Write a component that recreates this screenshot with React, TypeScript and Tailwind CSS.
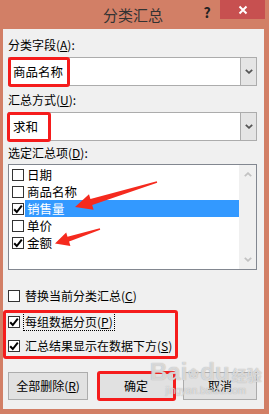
import React from "react";

const items = [
  { t: "日期", c: false, sel: false },
  { t: "商品名称", c: false, sel: false },
  { t: "销售量", c: true, sel: true },
  { t: "单价", c: false, sel: false },
  { t: "金额", c: true, sel: false },
];

function Box({ checked }: { checked?: boolean }) {
  return (
    <span className="w-[12px] h-[12px] border border-[#333333] bg-white shrink-0 flex items-center justify-center">
      {checked && (
        <svg width="10" height="10" viewBox="0 0 10 10">
          <path d="M1.2 5.2 L3.8 8 L8.8 1.6" stroke="#000" strokeWidth="2" fill="none" />
        </svg>
      )}
    </span>
  );
}

function Chevron({ up, color = "#555" }: { up?: boolean; color?: string }) {
  return (
    <svg width="8" height="5" viewBox="0 0 8 5">
      <path d={up ? "M0.8 4.2 L4 1.2 L7.2 4.2" : "M0.8 0.8 L4 3.8 L7.2 0.8"} stroke={color} strokeWidth="1.8" fill="none" />
    </svg>
  );
}

function Combo({ value }: { value: string }) {
  return (
    <div className="mt-[4px] h-[29px] border border-[#acacac] bg-white flex">
      <div className="flex-1 pl-[4px] leading-[27px] text-[12.5px]">{value}</div>
      <div className="w-[16px] bg-[#e5e5e5] border-l border-[#acacac] flex items-center justify-center">
        <Chevron />
      </div>
    </div>
  );
}

export default function App() {
  return (
    <div className="w-[269px] h-[414px] bg-[#d27f66] flex flex-col relative overflow-hidden text-[12px] text-black font-['Microsoft_YaHei','Noto_Sans_CJK_SC',sans-serif]">
      {/* title bar */}
      <div className="h-[29px] flex items-start shrink-0">
        <div className="flex-1 pl-[68px] text-center text-[15px] leading-[29px] text-[#333]">分类汇总</div>
        <div className="w-[22px] pr-[4px] text-center font-bold text-[14px] leading-[24px] text-[#222]">?</div>
        <div className="w-[45px] h-[19px] bg-[#c75050] flex items-center justify-center">
          <svg width="10" height="10" viewBox="0 0 10 10">
            <path d="M1.5 1.5 L8.5 8.5 M8.5 1.5 L1.5 8.5" stroke="#fff" strokeWidth="2" />
          </svg>
        </div>
        <div className="w-[4px]" />
      </div>

      {/* client area */}
      <div className="ml-[3px] mr-[5px] h-[380px] bg-[#f0f0f0] pl-[5px] pr-[7px] flex flex-col">
        <div className="mt-[8px] h-[16px] leading-[16px]">分类字段(<u>A</u>):</div>
        <Combo value="商品名称" />
        <div className="mt-[6px] h-[16px] leading-[16px]">汇总方式(<u>U</u>):</div>
        <Combo value="求和" />
        <div className="mt-[4px] h-[16px] leading-[16px]">选定汇总项(<u>D</u>):</div>

        <div className="mt-[3px] h-[106px] border border-[#828790] bg-white flex">
          <div className="flex-1 pt-[1px]">
            {items.map((i) => (
              <div key={i.t} className="h-[17px] flex items-center pl-[3px]">
                <Box checked={i.c} />
                <span className={i.sel ? "ml-[1px] h-[17px] flex-1 pl-[2px] leading-[17px] text-[12.5px] bg-[#3399ff] text-white" : "ml-[1px] h-[17px] flex-1 pl-[2px] leading-[17px] text-[12.5px]"}>
                  {i.t}
                </span>
              </div>
            ))}
          </div>
          <div className="w-[17px] bg-[#f0f0f0] flex flex-col justify-between items-center pt-[7px] pb-[7px]">
            <Chevron up color="#c2c2c2" />
            <Chevron color="#c2c2c2" />
          </div>
        </div>

        <div className="mt-[18px] h-[16px] flex items-center gap-[5px]">
          <Box />
          <span className="leading-[16px]">替换当前分类汇总(<u>C</u>)</span>
        </div>
        <div className="mt-[8px] h-[19px] flex items-center gap-[3px]">
          <Box checked />
          <span className="h-[19px] leading-[17px] px-[1px] border border-dotted border-black">每组数据分页(<u>P</u>)</span>
        </div>
        <div className="mt-[7px] h-[16px] flex items-center gap-[5px]">
          <Box checked />
          <span className="leading-[16px]">汇总结果显示在数据下方(<u>S</u>)</span>
        </div>

        <div className="mt-[18px] h-[28px] flex">
          <div className="w-[80px] border border-[#acacac] bg-[#e1e1e1] text-center leading-[26px]">全部删除(<u>R</u>)</div>
          <div className="ml-[10px] w-[76px] border border-[#acacac] bg-[#e1e1e1] text-center leading-[26px]">确定</div>
          <div className="ml-[9px] w-[74px] border border-[#acacac] bg-[#e1e1e1] text-center leading-[26px]">取消</div>
        </div>
      </div>

      {/* red annotations */}
      <div className="absolute left-[8px] top-[57px] w-[62px] h-[30px] border-[3px] border-[#f51c1c] rounded-[3px]" />
      <div className="absolute left-[7px] top-[112px] w-[44px] h-[30px] border-[3px] border-[#f51c1c] rounded-[3px]" />
      <div className="absolute left-[3px] top-[310px] w-[175px] h-[49px] border-[3px] border-[#f51c1c] rounded-[3px]" />
      <div className="absolute left-[97px] top-[371px] w-[79px] h-[30px] border-[3px] border-[#f51c1c] rounded-[3px]" />
      <svg className="absolute left-0 top-0" width="269" height="414" viewBox="0 0 269 414">
        <polygon points="156.8,181.2 90.4,199.1 89,194.3 75,207 93.6,209.7 92.2,204.9 157.2,182.8" fill="#f52a1e" />
        <polygon points="99.8,228.3 67.5,236.8 66.2,232.5 55,243.5 70.4,245.9 69.1,241.6 100.2,229.7" fill="#f52a1e" />
      </svg>

      {/* watermark */}
      <div className="absolute left-[150px] top-[358px] flex flex-col items-center text-white/60 [text-shadow:0_0_1px_#9a9a9a]">
        <div className="flex items-end font-['Liberation_Sans',sans-serif] font-bold text-[24px] leading-[28px]">
          <span>Bai</span>
          <span className="text-[13px] mx-[1px] leading-[24px]">❀</span>
          <span>du</span>
          <span className="text-[15px] ml-[2px] leading-[22px] font-['Noto_Sans_CJK_SC',sans-serif]">经验</span>
        </div>
        <div className="text-[10px] leading-[10px] font-['Liberation_Sans',sans-serif]">jingyan.baidu.com</div>
      </div>
    </div>
  );
}
